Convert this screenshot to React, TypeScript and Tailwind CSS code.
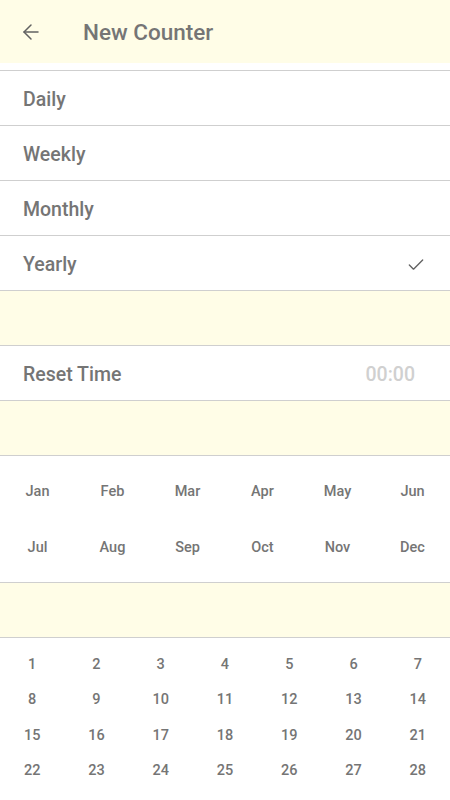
import { ArrowLeft, Check } from "lucide-react";

const PERIODS = ["Daily", "Weekly", "Monthly", "Yearly"] as const;
const MONTHS = ["Jan", "Feb", "Mar", "Apr", "May", "Jun", "Jul", "Aug", "Sep", "Oct", "Nov", "Dec"];
const DAYS = Array.from({ length: 28 }, (_, i) => i + 1);

export default function App() {
  const selected = "Yearly";

  return (
    <div className="h-[800px] w-[450px] overflow-hidden bg-white font-['Roboto',sans-serif] text-[#757575]">
      <header className="flex h-[63px] items-center bg-[#fffde7]">
        <button className="ml-[19px] flex h-6 w-6 items-center justify-center text-[#616161]">
          <ArrowLeft className="h-6 w-6" strokeWidth={1.5} />
        </button>
        <h1 className="ml-[40px] pt-[2px] text-[22.5px] font-medium text-[#757575]">New Counter</h1>
      </header>
      <div className="h-[7px]" />

      <ul className="border-t border-[#cfcfcf]">
        {PERIODS.map((p) => (
          <li
            key={p}
            className="flex h-[55px] items-center justify-between border-b border-[#cfcfcf] px-[23px] pt-[3px]"
          >
            <span className="text-[19.5px] font-medium">{p}</span>
            {p === selected && <Check className="mr-[1px] h-5 w-5 text-[#616161]" strokeWidth={1.6} />}
          </li>
        ))}
      </ul>

      <div className="h-[55px] border-b border-[#cfcfcf] bg-[#fffde7]" />

      <div className="flex h-[55px] items-center justify-between border-b border-[#cfcfcf] pl-[23px] pr-[35px] pt-[3px]">
        <span className="text-[19.5px] font-medium">Reset Time</span>
        <span className="text-[19.5px] font-medium text-[#d0d0d0]">00:00</span>
      </div>

      <div className="h-[55px] border-b border-[#cfcfcf] bg-[#fffde7]" />

      <div className="grid h-[127px] grid-cols-6 content-center border-b border-[#cfcfcf] pt-[2px]">
        {MONTHS.map((m) => (
          <div key={m} className="flex h-14 items-center justify-center text-[14.5px] font-medium">
            {m}
          </div>
        ))}
      </div>

      <div className="h-[55px] border-b border-[#cfcfcf] bg-[#fffde7]" />

      <div className="grid grid-cols-7 pt-[9px]">
        {DAYS.map((d) => (
          <div key={d} className="flex h-[35.5px] items-center justify-center text-[14.5px] font-medium">
            {d}
          </div>
        ))}
      </div>
    </div>
  );
}
